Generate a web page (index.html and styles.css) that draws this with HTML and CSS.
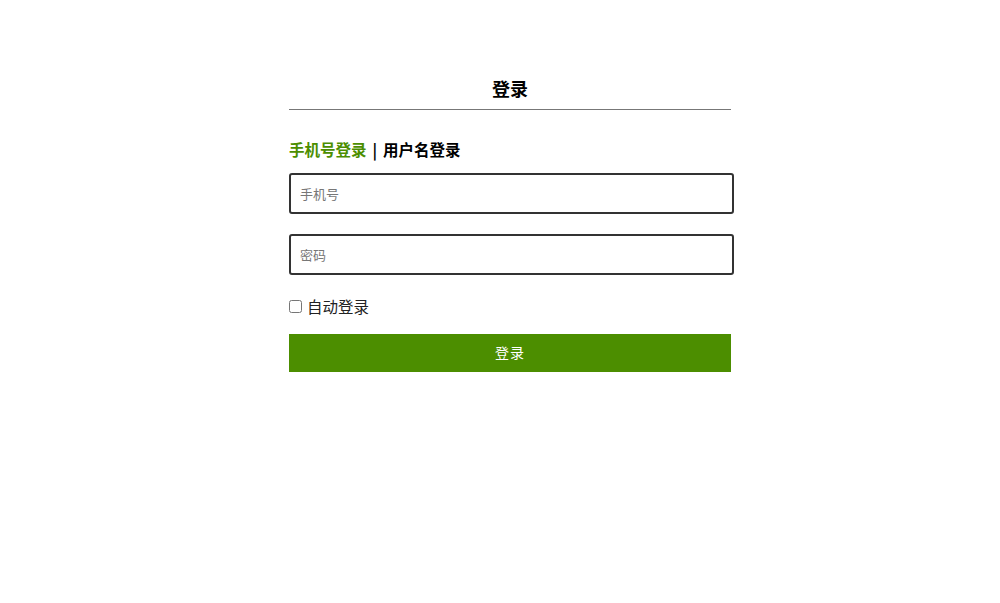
FILE: index.html
```html
<!DOCTYPE html>
<html lang="zh">
<head>
<meta charset="utf-8">
<title>登录</title>
<link rel="stylesheet" href="styles.css">
</head>
<body>
<div class="login">
  <h2 class="title">登录</h2>
  <div class="tabs"><span class="tab active">手机号登录</span><span class="sep">|</span><span class="tab">用户名登录</span></div>
  <form class="form">
    <input class="field" type="text" placeholder="手机号">
    <input class="field" type="password" placeholder="密码">
    <label class="remember"><input type="checkbox" class="check"> 自动登录</label>
    <button type="button" class="submit">登录</button>
  </form>
</div>
</body>
</html>
```
FILE: styles.css
```css
html, body {
  margin: 0;
  padding: 0;
  background: #fff;
}
body {
  font-family: "Microsoft YaHei", "Noto Sans CJK SC", sans-serif;
  color: #000;
}
.login {
  width: 442px;
  margin-left: 289px;
  padding-top: 73px;
}
.title {
  margin: 0;
  font-size: 18px;
  font-weight: bold;
  text-align: center;
  line-height: 30px;
  padding-bottom: 6px;
  border-bottom: 1px solid #777;
}
.tabs {
  display: flex;
  align-items: center;
  margin-top: 27px;
  font-size: 15.5px;
  font-weight: bold;
  line-height: 24px;
}
.sep {
  margin: 0 6px;
}
.tab.active {
  color: #4c8e00;
}
.form {
  display: flex;
  flex-direction: column;
  margin-top: 12px;
}
.field {
  box-sizing: border-box;
  width: 445px;
  height: 41px;
  border: 2px solid #333;
  border-radius: 3px;
  padding: 0 9px;
  font-size: 13px;
  font-family: inherit;
  margin-bottom: 20px;
  outline: none;
}
.field::placeholder {
  color: #777;
}
.remember {
  display: flex;
  align-items: center;
  font-size: 15.5px;
  line-height: 24px;
  margin-top: -1px;
  color: #222;
}
.check {
  width: 13px;
  height: 13px;
  margin: 0 5px 0 0;
}
.submit {
  margin-top: 16px;
  width: 442px;
  height: 38px;
  border: none;
  background: #4c8e00;
  color: #fff;
  font-size: 14px;
  font-family: inherit;
  letter-spacing: 1px;
  padding: 0 0 2px;
  cursor: pointer;
}
```
